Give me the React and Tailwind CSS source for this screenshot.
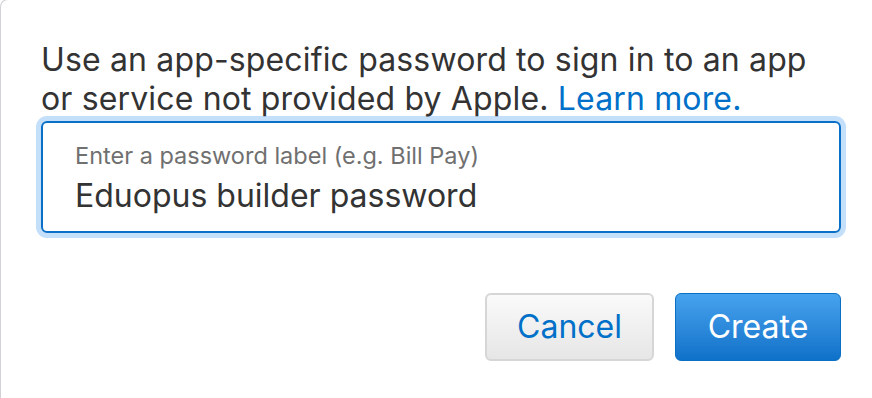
export default function App() {
  return (
    <div className="w-[872px] h-[398px] bg-white overflow-hidden" style={{ fontFamily: 'Inter, "Liberation Sans", sans-serif' }}>
      <div className="h-[400px] border-l border-t border-[#d2d2d7] rounded-tl-lg -mt-[1px] pl-[40px] pr-[31px] pt-[40px]">
        <p className="text-[32px] leading-[39px] text-[#333333] tracking-[0.15px]">
          Use an app-specific password to sign in to an app
          <br />
          or service not provided by Apple. <a className="text-[#0070c9]">Learn more.</a>
        </p>
        <div className="mt-[3px] h-[112px] rounded-[6px] border-2 border-[#0a6fc7] shadow-[0_0_0_5px_#c3dffa] px-[32px] pt-[19px]">
          <div className="text-[23.5px] leading-[28px] text-[#707070]">Enter a password label (e.g. Bill Pay)</div>
          <div className="text-[32px] leading-[40px] mt-[6px] text-[#333333]">Eduopus builder password</div>
        </div>
        <div className="flex justify-end gap-[21px] mt-[60px]">
          <button className="w-[169px] h-[68px] rounded-[6px] border-2 border-[#d6d6d6] bg-gradient-to-b from-[#fafafa] to-[#e6e6e6] text-[32px] text-[#0070c9]">
            Cancel
          </button>
          <button className="w-[166px] h-[68px] rounded-[6px] border border-[#0b6fc4] bg-gradient-to-b from-[#46a3ee] to-[#0e71c9] text-[32px] text-white">
            Create
          </button>
        </div>
      </div>
    </div>
  );
}
